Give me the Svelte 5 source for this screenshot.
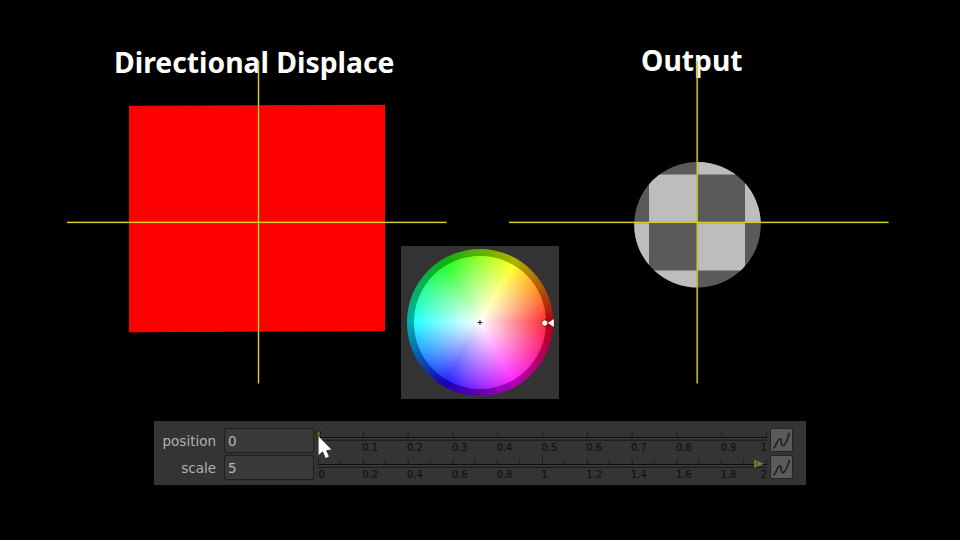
<script>
  const rows = [
    { name: 'position', value: '0', labels: ['', '0.1', '0.2', '0.3', '0.4', '0.5', '0.6', '0.7', '0.8', '0.9', '1'], half: false },
    { name: 'scale', value: '5', labels: ['0', '0.2', '0.4', '0.6', '0.8', '1', '1.2', '1.4', '1.6', '1.8', '2'], half: true }
  ];
  const step = 44.8;
</script>

<main>
  <section class="views">
    <figure class="source">
      <figcaption>Directional Displace</figcaption>
      <svg viewBox="0 0 380 384" width="380" height="384" aria-hidden="true">
        <path d="M62 105.7L318 104.8V331.2L62 332.2Z" fill="#fe0000" />
        <path class="glow" d="M191.5 61V383.5M0 222.4H379.5" />
        <path class="axis" d="M191.5 61V383.5M0 222.4H379.5" />
      </svg>
    </figure>
    <figure class="output">
      <figcaption>Output</figcaption>
      <svg viewBox="0 0 380 384" width="380" height="384" aria-hidden="true">
        <clipPath id="disc"><ellipse cx="188.5" cy="224.7" rx="63.3" ry="62.8" /></clipPath>
        <g clip-path="url(#disc)">
          <rect x="120" y="155" width="140" height="140" fill="#5a5a5a" />
          <path d="M140 174.5h48v48h-48zM188 126.5h48v48h-48zM188 222.5h48v48h-48zM92 222.5h48v48h-48zM236 174.5h48v48h-48zM140 270.5h48v48h-48z" fill="#bdbdbd" />
        </g>
        <path class="glow" d="M188.2 61V383.5M0 222.4H379.5" />
        <path class="axis" d="M188.2 61V383.5M0 222.4H379.5" />
      </svg>
    </figure>
    <div class="picker">
      <div class="wheel ring"></div>
      <div class="wheel hue"></div>
      <svg viewBox="0 0 159 153" width="159" height="153" aria-hidden="true">
        <path d="M76.5 76.5h5M79 74v5" stroke="#222" stroke-width="1" />
        <circle cx="143.7" cy="77" r="3.1" fill="#fff" stroke="#500" stroke-width=".7" />
        <path d="M146.5 77L153 72.7V81.3Z" fill="#fff" stroke="#500" stroke-width=".3" />
      </svg>
    </div>
  </section>

  <section class="panel">
    {#each rows as row}
      <div class="row">
        <span class="label">{row.name}</span>
        <span class="field">{row.value}</span>
        <svg class="ruler" viewBox="0 0 449 24" width="449" height="24">
          <path d="M0 9.5H449M0 12H449" stroke="#0c0c0c" stroke-width="1.1" />
          <path d="M0 10.8H449" stroke="#484848" stroke-width=".8" />
          {#each row.labels as text, i}
            <path d="M{i * step + 0.5} {row.half ? (i === 5 ? 0 : 4) : 3}V9" stroke="#1c1c1c" />
            {#if row.half && i < 10}
              <path d="M{(i + 0.5) * step} 4V9" stroke="#222" />
            {/if}
            <text x={i === 10 ? 449 : i * step + (i ? -0.5 : 0.5)} y="23" text-anchor={i === 10 ? 'end' : 'start'}>{text}</text>
          {/each}
          {#if row.half}
            <path d="M436 4.5L446 8.7L436 13Z" fill="#7d7632" />
            <path d="M438.5 7V10.5" stroke="#45421f" />
          {:else}
            <path d="M-1.5 3H2.5V8L.5 11L-1.5 8Z" fill="#5c572b" stroke="#1c1c18" />
          {/if}
        </svg>
        <span class="curve">
          <svg viewBox="0 0 22 22" width="22" height="22" aria-hidden="true">
            <path d="M3 18.7C5 18 6.2 10.3 8.8 9.8C11.2 9.6 9.2 16.8 11.8 16.6C14.8 16.2 16.8 10 18.2 4.5" fill="none" stroke="#242424" stroke-width="1.8" stroke-linecap="round" />
          </svg>
        </span>
      </div>
    {/each}
    <svg class="cursor" viewBox="0 0 14 23" width="14" height="23" aria-hidden="true">
      <path d="M.6 .5V19L4.8 15.3L7.7 22L10.9 20.6L8 14.2L13.3 13.5Z" fill="#fff" />
    </svg>
  </section>
</main>

<style>
  :global(body) { margin: 0; background: #000; }
  main { width: 960px; height: 540px; overflow: hidden; background: #000; display: flex; flex-direction: column; align-items: flex-start; }
  .views { position: relative; display: flex; gap: 62px; height: 421px; padding: 0 71px 0 67px; }
  figure { position: relative; width: 380px; margin: 0; }
  figcaption { color: #fff; font: 700 28.3px/38px "Noto Sans", "Open Sans", sans-serif; white-space: nowrap; padding: 43px 0 0 47px; }
  .output figcaption { padding: 41px 0 0 132px; }
  figure svg { position: absolute; left: 0; top: 0; }
  .axis { fill: none; stroke: #d8cf2c; stroke-width: 1.2; }
  .glow { fill: none; stroke: #8c8610; stroke-width: 2; opacity: .45; }
  .picker { position: absolute; left: 401px; top: 246px; width: 158px; height: 152.5px; background: #333; }
  .picker svg { position: absolute; left: 0; top: 0; }
  .wheel { position: absolute; border-radius: 50%; }
  .ring { left: 5.6px; top: 3px; width: 146.5px; height: 146.5px; background: conic-gradient(from 90deg, #b40010, #b000b0, #1800b0, #00b0b0, #10b010, #b0b000, #b40010); }
  .hue { left: 12.6px; top: 10px; width: 132.5px; height: 132.5px; background: radial-gradient(circle closest-side, #fff 0%, rgba(255, 255, 255, .15) 100%), conic-gradient(from 90deg, #f01, #f0f, #00f, #0ff, #0f0, #ff0, #f01); }
  .panel { position: relative; box-sizing: border-box; width: 652px; height: 64px; margin-left: 154px; padding: 7px 12px 7px 0; background: #343434; display: flex; flex-direction: column; gap: 3px; }
  .row { display: flex; height: 24px; align-items: center; }
  .label { width: 62px; margin-right: 8px; display: flex; justify-content: flex-end; padding-top: 2px; font: 13.5px/24px "DejaVu Sans", sans-serif; color: #b0b0b0; }
  .field { box-sizing: border-box; width: 90px; height: 25px; margin-right: 4px; padding-left: 3px; border: 1px solid #202020; border-radius: 3px; background: #3a3a3a; font: 13.5px/25px "DejaVu Sans", sans-serif; color: #b8b8b8; box-shadow: 0 0 1px #222; }
  .ruler { overflow: visible; flex: none; }
  .ruler text { font: 9.8px "DejaVu Sans", sans-serif; fill: #121212; stroke: #121212; stroke-width: .2px; }
  .curve { box-sizing: border-box; width: 23px; height: 24px; margin-left: 3px; border: 1px solid #252525; border-radius: 2px; background: #5a5a5a; display: grid; place-items: center; }
  .curve svg { display: block; }
  .cursor { position: absolute; left: 164px; top: 15px; }
</style>
